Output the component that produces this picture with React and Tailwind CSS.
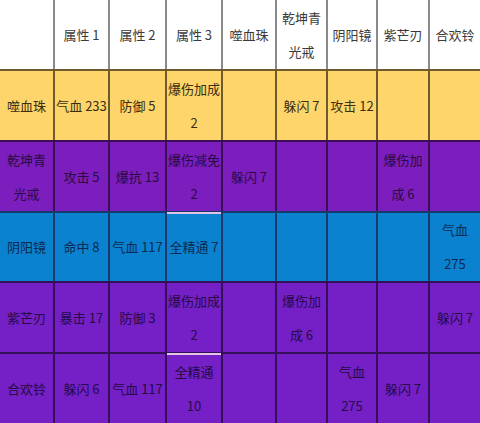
import React from "react";

const cols = ["属性 1", "属性 2", "属性 3", "噬血珠", ["乾坤青", "光戒"], "阴阳镜", "紫芒刃", "合欢铃"];

const rows = [
  {
    name: "噬血珠",
    bg: "bg-[#fdd56b]",
    line: "border-[#6e5a2c]",
    text: "text-[#3b2d10]",
    cells: ["气血 233", "防御 5", ["爆伤加成", "2"], "", "躲闪 7", "攻击 12", "", ""],
  },
  {
    name: ["乾坤青", "光戒"],
    bg: "bg-[#7c1ebd]",
    line: "border-[#3a0f55]",
    text: "text-[#2a0b44]",
    cells: ["攻击 5", "爆抗 13", ["爆伤减免", "2"], "躲闪 7", "", "", ["爆伤加", "成 6"], ""],
  },
  {
    name: "阴阳镜",
    bg: "bg-[#0b82cf]",
    line: "border-[#173a6c]",
    text: "text-[#0c2a52]",
    cells: ["命中 8", "气血 117", "全精通 7", "", "", "", "", ["气血", "275"]],
  },
  {
    name: "紫芒刃",
    bg: "bg-[#7420c6]",
    line: "border-[#34105a]",
    text: "text-[#260b46]",
    cells: ["暴击 17", "防御 3", ["爆伤加成", "2"], "", ["爆伤加", "成 6"], "", "", "躲闪 7"],
  },
  {
    name: "合欢铃",
    bg: "bg-[#7420c6]",
    line: "border-[#34105a]",
    text: "text-[#260b46]",
    cells: ["躲闪 6", "气血 117", ["全精通", "10"], "", "", ["气血", "275"], "躲闪 7", ""],
  },
];

const Text = ({ v }) =>
  Array.isArray(v) ? (
    <div className="leading-[34px]">
      {v.map((l, i) => (
        <div key={i}>{l}</div>
      ))}
    </div>
  ) : (
    <span>{v}</span>
  );

const App = () => {
  return (
    <div
      className="w-[480px] h-[423px] overflow-hidden bg-white grid grid-cols-[53px_55px_57px_56px_54px_51px_50px_52px_52px] grid-rows-[69px_71px_71px_70px_71px_71px] text-[13px] whitespace-nowrap"
      style={{ fontFamily: '"Noto Sans CJK SC", "Noto Sans", sans-serif' }}
    >
      <div className="bg-white" />
      {cols.map((c, i) => (
        <div
          key={i}
          className="flex items-center justify-center text-center border-l-2 border-[#8a8a8a] text-[#3a3a3a] bg-white"
        >
          <Text v={c} />
        </div>
      ))}
      {rows.map((r, ri) => (
        <React.Fragment key={ri}>
          <div
            className={`flex items-center justify-center text-center border-t-2 ${r.bg} ${r.line} ${r.text}`}
          >
            <Text v={r.name} />
          </div>
          {r.cells.map((c, ci) => {
            const light = ci === 2 && (ri === 1 || ri === 3);
            return (
              <div
                key={ci}
                className={`flex items-center justify-center text-center border-t-2 border-l-2 ${r.bg} ${r.line} ${r.text} ${light ? "relative" : ""}`}
              >
                <Text v={c} />
                {light && <div className="absolute left-0 right-0 -bottom-[3px] h-[2px] bg-[#e2c3e6]" />}
              </div>
            );
          })}
        </React.Fragment>
      ))}
    </div>
  );
};

export default App;
